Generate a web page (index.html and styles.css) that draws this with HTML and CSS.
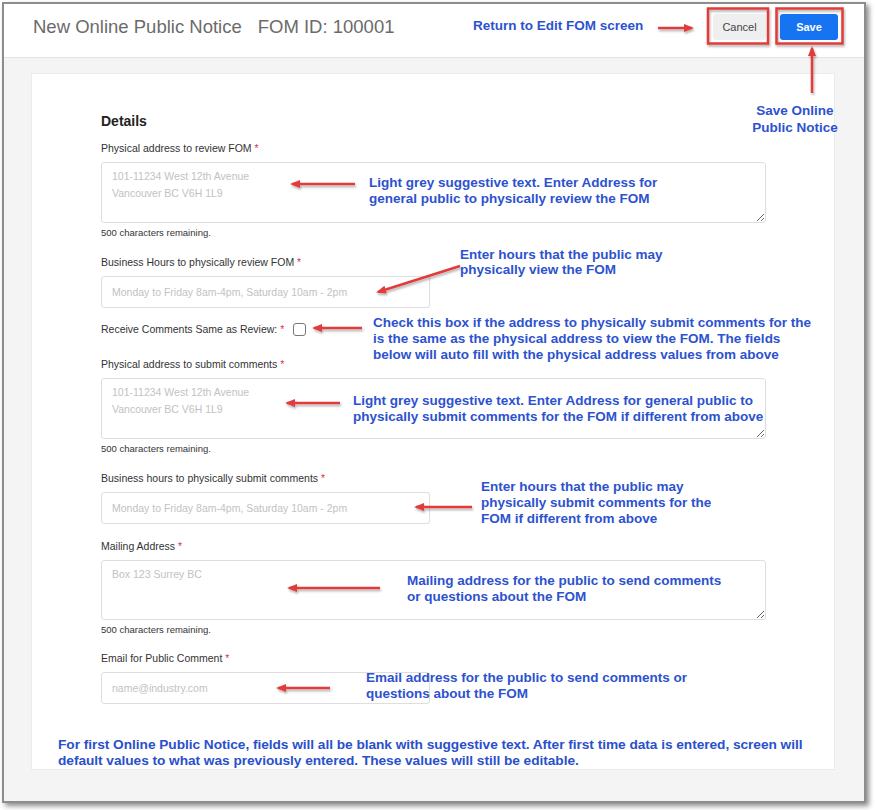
FILE: index.html
```html
<!DOCTYPE html>
<html lang="en">
<head>
<meta charset="utf-8">
<title>New Online Public Notice</title>
<link rel="stylesheet" href="styles.css">
</head>
<body>
<div class="page">
  <div class="frame">
    <header class="header">
      <h1 class="title"><span>New Online Public Notice</span><span class="fom-id">FOM ID: 100001</span></h1>
      <div class="actions">
        <button class="btn btn-cancel" type="button">Cancel</button>
        <button class="btn btn-save" type="button">Save</button>
      </div>
    </header>
    <main class="main">
      <section class="card">
        <form class="form">
          <h2 class="section-title">Details</h2>
          <div class="field">
            <label class="label">Physical address to review FOM <span class="req">*</span></label>
            <textarea class="textarea" placeholder="101-11234 West 12th Avenue&#10;Vancouver BC V6H 1L9"></textarea>
            <div class="hint">500 characters remaining.</div>
          </div>
          <div class="field">
            <label class="label">Business Hours to physically review FOM <span class="req">*</span></label>
            <input class="input" type="text" placeholder="Monday to Friday 8am-4pm, Saturday 10am - 2pm">
          </div>
          <div class="check-row">
            <span class="check-label">Receive Comments Same as Review: <span class="req">*</span></span>
            <input class="checkbox" type="checkbox">
          </div>
          <div class="field">
            <label class="label">Physical address to submit comments <span class="req">*</span></label>
            <textarea class="textarea" placeholder="101-11234 West 12th Avenue&#10;Vancouver BC V6H 1L9"></textarea>
            <div class="hint">500 characters remaining.</div>
          </div>
          <div class="field">
            <label class="label">Business hours to physically submit comments <span class="req">*</span></label>
            <input class="input" type="text" placeholder="Monday to Friday 8am-4pm, Saturday 10am - 2pm">
          </div>
          <div class="field field-tight">
            <label class="label">Mailing Address <span class="req">*</span></label>
            <textarea class="textarea textarea-short" placeholder="Box 123 Surrey BC"></textarea>
            <div class="hint">500 characters remaining.</div>
          </div>
          <div class="field field-tight">
            <label class="label">Email for Public Comment <span class="req">*</span></label>
            <input class="input" type="text" placeholder="name@industry.com">
          </div>
        </form>
        <p class="note">For first Online Public Notice, fields will all be blank with suggestive text. After first time data is entered, screen will<br>default values to what was previously entered. These values will still be editable.</p>
      </section>
    </main>
  </div>

  <svg class="overlay" width="875" height="810" viewBox="0 0 875 810" xmlns="http://www.w3.org/2000/svg">
    <defs>
      <marker id="ah" markerUnits="userSpaceOnUse" markerWidth="10" markerHeight="8" refX="8" refY="4" orient="auto">
        <path d="M0,0 L10,4 L0,8 z" fill="#e23b3b"/>
      </marker>
      <filter id="sh" x="-20%" y="-50%" width="140%" height="200%">
        <feDropShadow dx="1" dy="2" stdDeviation="1.2" flood-color="#000" flood-opacity="0.3"/>
      </filter>
    </defs>
    <g stroke="#e23b3b" stroke-width="2.5" fill="none" filter="url(#sh)">
      <rect x="708" y="8.5" width="60" height="35"/>
      <rect x="776.5" y="8.5" width="66" height="35"/>
      <line x1="658" y1="28" x2="692" y2="28" marker-end="url(#ah)"/>
      <line x1="812" y1="93" x2="812" y2="48" marker-end="url(#ah)"/>
      <line x1="355" y1="184" x2="292" y2="184" marker-end="url(#ah)"/>
      <line x1="460" y1="266" x2="378" y2="292" marker-end="url(#ah)"/>
      <line x1="362" y1="328" x2="314" y2="328" marker-end="url(#ah)"/>
      <line x1="340" y1="403" x2="287" y2="403" marker-end="url(#ah)"/>
      <line x1="472" y1="507" x2="416" y2="507" marker-end="url(#ah)"/>
      <line x1="380" y1="588" x2="289" y2="588" marker-end="url(#ah)"/>
      <line x1="330" y1="688" x2="278" y2="688" marker-end="url(#ah)"/>
    </g>
  </svg>

  <div class="ann ann-return">Return to Edit FOM screen</div>
  <div class="ann ann-save">Save Online<br>Public Notice</div>
  <div class="ann ann-a1">Light grey suggestive text. Enter Address for<br>general public to physically review the FOM</div>
  <div class="ann ann-a2">Enter hours that the public may<br>physically view the FOM</div>
  <div class="ann ann-a3">Check this box if the address to physically submit comments for the<br>is the same as the physical address to view the FOM. The fields<br>below will auto fill with the physical address values from above</div>
  <div class="ann ann-a4">Light grey suggestive text. Enter Address for general public to<br>physically submit comments for the FOM if different from above</div>
  <div class="ann ann-a5">Enter hours that the public may<br>physically submit comments for the<br>FOM if different from above</div>
  <div class="ann ann-a6">Mailing address for the public to send comments<br>or questions about the FOM</div>
  <div class="ann ann-a7">Email address for the public to send comments or<br>questions about the FOM</div>
</div>
</body>
</html>
```

FILE: styles.css
```css
* { box-sizing: border-box; }

html, body {
  margin: 0;
  padding: 0;
  background: #ffffff;
}

body {
  font-family: "Liberation Sans", Arial, sans-serif;
  color: #333333;
}

.page {
  position: relative;
  width: 875px;
  height: 810px;
  overflow: hidden;
}

.frame {
  margin: 2px 0 0 2px;
  width: 864px;
  height: 801px;
  border: 2px solid #8d8d8d;
  background: #f4f4f4;
  box-shadow: 3px 3px 5px rgba(0, 0, 0, 0.45);
  display: flex;
  flex-direction: column;
}

.header {
  height: 54px;
  background: #ffffff;
  border-bottom: 1px solid #e4e4e4;
  display: flex;
  align-items: flex-start;
  padding: 10px 26px 0 29px;
}

.title {
  margin: 0;
  font-size: 18.5px;
  line-height: 26px;
  font-weight: normal;
  color: #6b6b6b;
  white-space: nowrap;
}

.fom-id {
  margin-left: 16px;
}

.actions {
  margin-left: auto;
  display: flex;
  gap: 14px;
}

.btn {
  height: 26px;
  border: none;
  border-radius: 3px;
  font-family: "Liberation Sans", Arial, sans-serif;
  font-size: 11px;
  padding: 0;
}

.btn-cancel {
  width: 53px;
  background: #efefef;
  color: #444444;
}

.btn-save {
  width: 58px;
  background: #1673f2;
  color: #ffffff;
  font-weight: bold;
}

.main {
  flex: 1;
  padding: 15px 29px 0 27px;
}

.card {
  background: #ffffff;
  border: 1px solid #ebebeb;
  padding: 38px 0 0 0;
}

.form {
  margin: 0 68px 0 69px;
}

.section-title {
  margin: 0 0 11px;
  font-size: 14px;
  line-height: 18px;
  font-weight: bold;
  color: #222222;
}

.field {
  margin-top: 16px;
}

.field-tight {
  margin-top: 15px;
}

.section-title + .field {
  margin-top: 0;
}

.label {
  display: block;
  font-size: 10.5px;
  line-height: 14px;
  margin-bottom: 7px;
  color: #333333;
}

.req {
  color: #dc3545;
}

.textarea {
  display: block;
  width: 100%;
  height: 61px;
  border: 1px solid #dedede;
  border-radius: 3px;
  padding: 5px 10px;
  font-family: "Liberation Sans", Arial, sans-serif;
  font-size: 10.5px;
  line-height: 17px;
  color: #333;
  resize: vertical;
}

.textarea-short {
  height: 60px;
}

.textarea::placeholder,
.input::placeholder {
  color: #c2c2c2;
}

.hint {
  margin-top: 4px;
  font-size: 9.5px;
  line-height: 12px;
  color: #333333;
}

.input {
  display: block;
  width: 49.4%;
  height: 32px;
  border: 1px solid #dedede;
  border-radius: 3px;
  padding: 0 10px;
  font-family: "Liberation Sans", Arial, sans-serif;
  font-size: 10.5px;
  color: #333;
}

.check-row {
  margin-top: 14px;
  display: flex;
  align-items: center;
  height: 14px;
}

.check-row + .field {
  margin-top: 21px;
}

.check-label {
  font-size: 10.5px;
  line-height: 14px;
}

.checkbox {
  appearance: none;
  -webkit-appearance: none;
  margin: 0 0 0 9px;
  width: 13px;
  height: 13px;
  border: 1.5px solid #777777;
  border-radius: 3px;
  background: #ffffff;
}

.note {
  margin: 33px 0 0 26px;
  font-size: 13.7px;
  line-height: 16px;
  font-weight: bold;
  color: #2a50cc;
  white-space: nowrap;
  letter-spacing: -0.04px;
}

.overlay {
  position: absolute;
  left: 0;
  top: 0;
  pointer-events: none;
}

.ann {
  position: absolute;
  font-size: 13.5px;
  line-height: 16px;
  font-weight: bold;
  color: #2d52cf;
  white-space: nowrap;
}

.ann-return { left: 473px; top: 18px; }
.ann-save { left: 748px; top: 102px; width: 94px; text-align: center; line-height: 17px; }
.ann-a1 { left: 369px; top: 175px; }
.ann-a2 { left: 460px; top: 247px; line-height: 15px; }
.ann-a3 { left: 373px; top: 315px; }
.ann-a4 { left: 353px; top: 393px; }
.ann-a5 { left: 481px; top: 479px; }
.ann-a6 { left: 407px; top: 573px; }
.ann-a7 { left: 366px; top: 670px; }
```
